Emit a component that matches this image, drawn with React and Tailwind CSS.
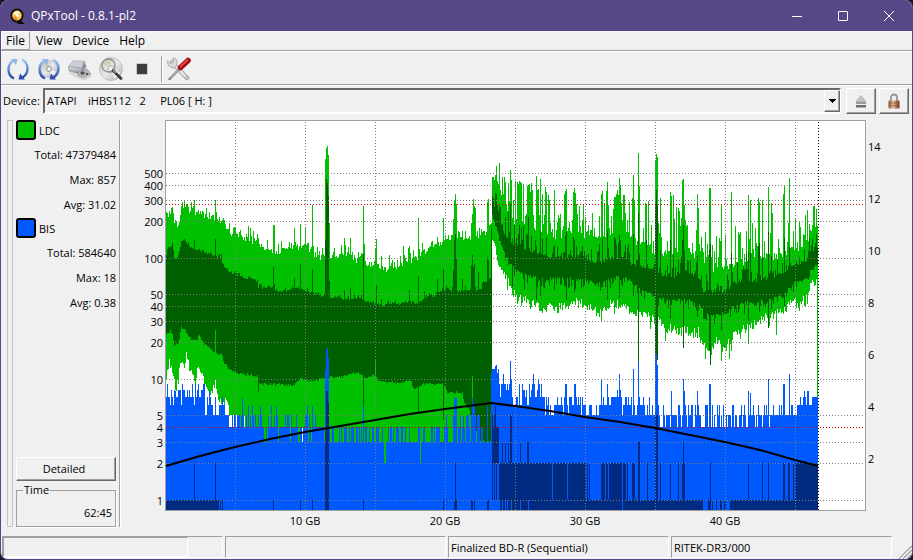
import React from 'react';

const GREEN = '#00c000';
const DARK_GREEN = '#006000';
const BLUE = '#0058ff';
const NAVY = '#002b80';

const PLOT = { left: 166, right: 865, top: 121, bottom: 510 };
const SPLIT = 492; // layer break

// log scale, 121px per decade
const yOf = (v) => Math.floor(500 - 121 * Math.log10(v));

const rand = (x, salt) => {
  const n = Math.sin(x * 127.1 + salt * 311.7) * 43758.5453;
  return n - Math.floor(n);
};

const lerp = (points, x) => {
  for (let i = 1; i < points.length; i++) {
    const [x1, y1] = points[i];
    const [x0, y0] = points[i - 1];
    if (x <= x1) return x1 === x0 ? y1 : y0 + ((y1 - y0) * (x - x0)) / (x1 - x0);
  }
  return points[points.length - 1][1];
};

const ldcMax = [[165, 221], [168, 216], [172, 210], [174, 221], [178, 226], [181, 209], [185, 205], [190, 211], [200, 213], [212, 218], [220, 221], [223, 221], [228, 232], [231, 236], [235, 232], [240, 240], [248, 238], [256, 243], [260, 249], [270, 249], [280, 252], [290, 248], [300, 247], [310, 252], [320, 257], [326, 258], [335, 256], [352, 256], [356, 262], [360, 254], [364, 257], [368, 266], [374, 261], [380, 268], [388, 272], [395, 266], [402, 264], [410, 261], [418, 259], [425, 251], [435, 245], [442, 242], [446, 238], [452, 240], [460, 236], [467, 240], [475, 236], [483, 236], [487, 229], [491, 222],
  [492, 178], [497, 181], [500, 190], [504, 206], [510, 216], [515, 222], [525, 224], [530, 216], [535, 230], [545, 234], [555, 236], [570, 234], [580, 229], [585, 236], [590, 240], [600, 239], [612, 232], [625, 230], [633, 240], [645, 248], [655, 255], [665, 256], [672, 252], [680, 250], [690, 253], [700, 261], [715, 271], [725, 266], [735, 266], [745, 261], [755, 261], [765, 256], [775, 257], [785, 254], [790, 249], [800, 248], [806, 243], [812, 233], [817, 225]];

const ldcMaxSpikes = [[182, 202], [191, 202], [194, 200], [215, 200], [240, 230], [248, 226], [250, 228], [257, 234], [273, 225], [274, 225], [294, 228], [300, 224], [305, 227], [312, 205], [317, 247], [325, 159], [326, 148], [327, 146], [328, 155], [329, 223], [344, 238], [345, 245], [350, 238], [358, 252], [363, 206], [364, 244], [375, 249], [376, 239], [381, 256], [389, 255], [403, 246], [408, 248], [409, 246], [413, 250], [418, 218], [419, 249], [422, 243], [437, 237], [443, 218], [453, 219], [454, 201], [455, 194], [456, 204], [462, 231], [465, 231], [471, 223], [472, 214], [473, 199], [474, 206], [475, 208], [487, 202], [488, 199],
  [493, 177], [495, 175], [496, 166], [497, 181], [498, 184], [500, 190], [502, 177], [504, 177], [505, 182], [508, 183], [510, 170], [511, 180], [515, 181], [517, 182], [518, 184], [519, 181], [520, 182], [521, 183], [523, 184], [527, 186], [528, 185], [529, 184], [530, 192], [531, 183], [532, 190], [536, 176], [537, 190], [538, 189], [540, 179], [542, 194], [545, 187], [546, 192], [548, 195], [549, 200], [554, 190], [558, 215], [564, 194], [565, 191], [566, 189], [569, 222], [573, 192], [574, 188], [575, 193], [576, 204], [577, 214], [579, 206], [582, 220], [588, 225], [599, 216], [601, 194], [602, 191], [604, 203], [606, 191], [607, 182], [608, 205], [611, 216], [614, 197], [615, 197], [616, 194], [617, 190], [618, 195], [619, 178], [620, 185], [621, 203], [623, 195], [625, 213], [627, 220], [632, 198], [633, 175], [634, 200], [638, 153], [639, 186], [645, 203], [646, 204], [648, 201], [651, 225], [655, 160], [656, 154], [657, 157], [658, 223], [660, 198], [667, 241], [670, 192], [671, 196], [673, 195], [676, 207], [678, 208], [679, 211], [682, 180], [683, 179], [684, 205], [685, 220], [686, 226], [687, 225], [692, 243], [697, 194], [698, 208], [709, 188], [710, 188], [712, 245], [721, 204], [725, 235], [731, 192], [735, 226], [746, 231], [748, 195], [750, 200], [752, 223], [756, 243], [758, 198], [759, 202], [762, 200], [768, 187], [771, 203], [772, 213], [778, 239], [783, 194], [784, 186], [788, 223], [789, 178], [793, 231], [795, 218], [804, 235], [807, 210], [810, 230], [814, 206], [816, 209], [817, 226]];

const ldcAvgTop = [[165, 257], [168, 248], [172, 245], [174, 257], [178, 258], [181, 241], [185, 240], [190, 248], [200, 250], [212, 256], [221, 257], [223, 268], [230, 272], [240, 276], [250, 279], [257, 281], [258, 287], [270, 288], [280, 292], [292, 289], [300, 288], [310, 293], [320, 296], [330, 297], [345, 299], [360, 298], [370, 303], [380, 305], [390, 304], [400, 304], [410, 301], [417, 305], [425, 298], [435, 295], [445, 289], [450, 291], [470, 291], [480, 289], [485, 282], [491, 279],
  [492, 200], [494, 210], [498, 222], [502, 230], [505, 236], [508, 240], [512, 244], [520, 248], [530, 252], [545, 257], [560, 258], [570, 257], [583, 257], [590, 262], [600, 262], [612, 258], [625, 259], [632, 264], [640, 267], [650, 268], [660, 277], [675, 277], [683, 268], [690, 274], [700, 283], [703, 291], [728, 292], [731, 284], [745, 283], [765, 280], [780, 275], [795, 265], [805, 262], [812, 252], [817, 247]];

const ldcAvgTopSpikes = [[194, 240], [215, 239], [273, 267], [274, 284], [294, 278], [300, 264], [312, 269], [325, 240], [326, 179], [327, 183], [328, 196], [329, 281], [344, 290], [350, 288], [363, 253], [376, 285], [381, 299], [409, 290], [418, 276], [424, 291], [437, 279], [443, 269], [446, 286], [453, 270], [454, 240], [455, 234], [456, 259], [462, 279], [465, 286], [471, 265], [472, 255], [473, 267], [474, 264], [478, 272], [487, 257], [488, 260], [491, 227],
  [495, 193], [496, 194], [497, 205], [499, 206], [502, 224], [505, 217], [508, 212], [510, 204], [514, 225], [519, 225], [521, 228], [523, 226], [528, 217], [531, 236], [536, 246], [540, 231], [546, 237], [554, 245], [557, 247], [565, 236], [566, 232], [574, 240], [576, 246], [602, 238], [607, 230], [614, 237], [619, 235], [620, 240], [633, 234], [638, 213], [646, 240], [655, 203], [656, 190], [657, 205], [660, 250], [670, 240], [673, 255], [678, 260], [682, 240], [683, 225], [684, 250], [697, 256], [709, 250], [710, 244], [731, 253], [746, 254], [748, 252], [750, 253], [758, 246], [759, 243], [762, 257], [768, 232], [771, 256], [784, 238], [789, 247], [814, 247]];

const ldcAvgBottom = [[165, 336], [170, 331], [172, 333], [174, 345], [178, 344], [181, 328], [184, 328], [187, 334], [192, 341], [197, 339], [199, 335], [203, 343], [210, 349], [215, 354], [221, 354], [224, 363], [230, 370], [240, 374], [257, 376], [259, 384], [292, 385], [300, 378], [310, 381], [325, 378], [341, 377], [350, 374], [360, 373], [365, 379], [372, 375], [376, 376], [379, 382], [400, 383], [411, 380], [413, 389], [425, 384], [443, 384], [447, 392], [462, 393], [464, 404], [469, 410], [474, 428], [480, 440], [491, 442],
  [492, 216], [496, 228], [500, 240], [505, 255], [512, 265], [520, 272], [530, 276], [545, 280], [555, 277], [570, 278], [585, 280], [600, 284], [612, 277], [625, 277], [640, 289], [655, 294], [662, 299], [690, 300], [700, 306], [705, 313], [715, 315], [728, 312], [733, 304], [745, 303], [765, 299], [780, 295], [795, 282], [805, 278], [815, 265], [817, 265]];

const ldcAvgBottomSpikes = [[215, 330], [258, 392], [363, 414], [375, 360], [418, 413], [443, 420], [472, 376], [512, 287], [524, 290], [536, 300], [540, 296], [554, 290], [566, 300], [574, 292], [607, 300], [619, 298], [633, 296], [638, 361], [655, 358], [656, 365], [657, 360], [670, 319], [683, 348], [697, 317], [709, 350], [710, 365], [721, 330], [748, 321], [768, 328], [759, 312], [771, 309], [784, 306]];

const ldcMin = [[165, 377], [168, 372], [170, 366], [173, 376], [175, 390], [178, 380], [180, 362], [184, 364], [186, 354], [189, 367], [195, 384], [198, 364], [203, 380], [208, 394], [214, 388], [218, 398], [228, 404], [229, 442], [491, 442],
  [492, 236], [494, 243], [497, 255], [500, 265], [505, 275], [510, 286], [515, 295], [525, 300], [535, 304], [555, 306], [570, 305], [580, 300], [590, 307], [600, 310], [612, 303], [625, 306], [635, 312], [645, 313], [655, 320], [660, 320], [665, 330], [672, 326], [680, 328], [690, 332], [698, 330], [705, 348], [712, 345], [718, 338], [724, 345], [731, 340], [735, 330], [745, 328], [760, 320], [775, 312], [785, 308], [792, 300], [800, 302], [806, 298], [811, 283], [817, 280]];

const ldcMinSpikes = [[169, 359], [186, 352], [215, 380], [302, 428], [384, 463], [385, 463], [420, 463], [521, 306], [540, 311], [553, 309], [601, 321], [650, 329], [665, 341], [700, 343], [705, 359], [721, 361], [729, 359], [748, 344], [776, 335], [817, 400]];

// x range, BIS levels that show up in it
const bisZones = [
  [166, 169, [6, 7, 9]], [169, 178, [7, 7, 7, 8, 6]], [178, 205, [6, 7, 8, 7, 8, 9]], [205, 226, [5, 6, 6, 7, 5]],
  [226, 246, [5, 5, 5, 4]], [246, 262, [5, 5, 4, 4]], [262, 325, [4, 4, 3, 4, 5, 4]], [325, 345, [4, 3, 3, 4]],
  [345, 445, [4, 4, 3, 3]], [445, 480, [3, 4, 5, 3]], [480, 491, [3, 4, 3]],
  [491, 499, [11, 12, 12]], [499, 512, [9, 8, 9, 7]], [512, 530, [8, 6, 7, 9, 6]], [530, 545, [9, 8, 7, 9, 7]],
  [545, 585, [6, 7, 5, 6, 6, 7]], [585, 600, [5, 6, 6, 5]], [600, 614, [6, 7, 6]], [614, 622, [8, 7]], [622, 655, [6, 7, 6, 5]],
  [655, 700, [5, 4, 6, 5]], [700, 728, [4, 5, 6, 4]], [728, 770, [5, 6, 5, 4]], [770, 798, [5, 5, 6]], [798, 812, [6, 7, 6]], [812, 818, [7]],
];

const bisSpikes = [[167, 384], [175, 391], [182, 384], [198, 384], [209, 391], [242, 398], [248, 406], [252, 406], [260, 406], [271, 406], [276, 406], [307, 406], [312, 406], [325, 370], [326, 350], [327, 348], [328, 358], [363, 406], [454, 398], [455, 398], [456, 398], [472, 398], [473, 406], [474, 406], [487, 406], [492, 369], [495, 366], [496, 365], [503, 374], [510, 361], [511, 379], [533, 374], [538, 379], [565, 384], [566, 384], [574, 384], [575, 384], [601, 379], [607, 384], [619, 374], [633, 369], [638, 361], [655, 354], [656, 354], [657, 365], [671, 391], [683, 379], [684, 391], [697, 391], [709, 384], [710, 384], [748, 391], [750, 393], [768, 379], [783, 384], [784, 384], [789, 374], [804, 391], [807, 391], [808, 391]];

// x, width, top, bottom
const bisAvg = [
  [166, 49, 500, 510], [216, 1, 500, 510], [217, 2, 500, 510], [220, 1, 500, 510], [222, 1, 500, 510],
  [194, 1, 463, 500], [215, 1, 463, 510], [273, 1, 500, 510], [300, 1, 500, 510], [312, 1, 500, 510],
  [325, 1, 430, 510], [326, 2, 391, 510], [328, 1, 403, 510], [363, 1, 500, 510], [443, 1, 500, 510],
  [455, 1, 463, 510], [454, 3, 500, 510], [471, 2, 500, 510], [474, 1, 500, 510], [487, 2, 500, 510],
  [492, 1, 415, 500], [493, 1, 427, 463], [494, 1, 415, 500], [495, 1, 406, 463], [496, 1, 427, 500], [497, 2, 427, 463],
  [502, 1, 442, 463], [505, 1, 442, 463], [508, 1, 442, 463], [510, 2, 415, 463], [520, 1, 442, 463], [527, 2, 442, 463],
  [499, 53, 463, 500], [553, 14, 463, 500], [568, 18, 463, 500], [587, 1, 463, 500], [589, 1, 463, 500],
  [601, 4, 463, 500], [606, 2, 463, 500], [609, 1, 463, 500], [610, 12, 463, 500], [623, 3, 463, 500], [627, 1, 463, 500],
  [632, 3, 463, 500], [638, 2, 442, 500], [647, 1, 463, 500], [655, 3, 415, 500], [660, 1, 463, 500], [670, 1, 463, 500],
  [678, 1, 463, 500], [682, 3, 463, 500], [683, 1, 442, 463], [710, 1, 463, 510], [748, 1, 463, 500], [762, 1, 463, 500],
  [768, 1, 463, 500], [783, 2, 463, 500], [788, 2, 463, 500], [793, 1, 463, 500], [795, 23, 463, 500],
  [500, 2, 500, 510], [503, 2, 500, 510], [506, 1, 500, 510], [508, 3, 500, 510], [512, 8, 500, 510], [521, 7, 500, 510],
  [529, 93, 500, 510], [623, 80, 500, 510], [708, 3, 500, 510], [712, 1, 500, 510], [716, 1, 500, 510], [720, 2, 500, 510],
  [724, 2, 500, 510], [730, 88, 500, 510],
];

// grow = how far single columns may stick out past the envelope, [first layer, second layer]
const layer = (anchors, spikes, salt, noise, grow) => {
  const map = new Map(spikes);
  const out = {};
  for (let x = PLOT.left; x < 818; x++) {
    const reach = x < SPLIT ? grow[0] : grow[1];
    const stick = Math.pow(rand(x, salt + 20), 4) * reach;
    out[x] = map.has(x) ? map.get(x) : Math.round(lerp(anchors, x) + (rand(x, salt) - 0.5) * noise + stick);
  }
  return out;
};

const bars = (top, bottom) => {
  let d = '';
  for (let x = PLOT.left; x < 818; x++) {
    const b = typeof bottom === 'number' ? bottom : bottom[x];
    if (top[x] < b) d += `M${x} ${top[x]}h1V${b}h-1z`;
  }
  return d;
};

const maxTop = layer(ldcMax, ldcMaxSpikes, 1, 7, [-8, -34]);
const avgTop = layer(ldcAvgTop, ldcAvgTopSpikes, 2, 3, [-3, -20]);
const avgBottom = layer(ldcAvgBottom, ldcAvgBottomSpikes, 3, 3, [0, 10]);
const minBottom = layer(ldcMin, ldcMinSpikes, 4, 9, [0, 8]);
for (let x = PLOT.left; x < 818; x++) {
  if (avgBottom[x] > minBottom[x]) minBottom[x] = avgBottom[x];
  if (x > 228 && x < SPLIT && minBottom[x] < 463 && x !== 302) minBottom[x] = 442;
}
// small holes between the two series
[229, 230, 231, 233, 236, 244].forEach((x) => { minBottom[x] = 415; });

const bisSpikeMap = new Map(bisSpikes);
const bisTop = {};
bisZones.forEach(([from, to, levels]) => {
  for (let x = from; x < to; x++) {
    bisTop[x] = bisSpikeMap.get(x) ?? yOf(levels[Math.floor(rand(x, 9) * levels.length)]);
  }
});
[229, 230, 231, 233, 236, 244].forEach((x) => { bisTop[x] = 427; });
[384, 385, 420].forEach((x) => { bisTop[x] = 463; });
bisTop[302] = 442;

const speed = [[166, 466], [200, 456], [235, 447], [270, 439], [305, 432], [340, 426], [375, 420], [410, 414], [445, 409], [491, 403], [515, 406], [550, 411], [585, 417], [620, 422], [655, 428], [690, 435], [725, 442], [760, 450], [795, 460], [818, 466]];

const leftTicks = [500, 400, 300, 200, 100, 50, 40, 30, 20, 10, 5, 4, 3, 2, 1];
const rightTicks = [14, 12, 10, 8, 6, 4, 2];

function Chart() {
  return (
    <svg viewBox="121 117 791 415" className="block w-full h-full min-w-0 flex-1 text-[11px]" role="img" aria-label="LDC / BIS">
      <g shapeRendering="crispEdges">
        <rect x="165" y="120" width="701" height="391" fill="#a0a0a0" />
        <rect x="166" y="121" width="699" height="389" fill="#fff" />
        <path d={bars(maxTop, minBottom)} fill={GREEN} />
        <path d={bars(avgTop, avgBottom)} fill={DARK_GREEN} />
        <path d={bars(bisTop, 510)} fill={BLUE} />
        {bisAvg.map(([x, w, top, bottom]) => (
          <rect key={`${x}-${top}`} x={x} y={top} width={w} height={bottom - top} fill={NAVY} />
        ))}
        {leftTicks.map((v) => (
          <line key={v} x1="166" x2="865" y1={yOf(v) + 0.5} y2={yOf(v) + 0.5} stroke={v === 4 ? '#d00000' : '#808080'} strokeDasharray="1 2" />
        ))}
        <line x1="166" x2="865" y1="204.5" y2="204.5" stroke="#d00000" strokeDasharray="1 2" />
        {[5, 10, 15, 20, 25, 30, 35, 40, 45].map((gb) => (
          <line key={gb} x1={165.5 + gb * 14} x2={165.5 + gb * 14} y1="122" y2="510" stroke="#808080" strokeDasharray="1 2" />
        ))}
        <line x1="818.5" x2="818.5" y1="122" y2="510" stroke="#000" strokeDasharray="1 2" />
      </g>
      <polyline points={speed.map((p) => p.join(',')).join(' ')} fill="none" stroke="#000" strokeWidth="2" />
      {leftTicks.map((v) => (
        <text key={v} x="163" y={yOf(v) + 5} textAnchor="end">{v}</text>
      ))}
      {rightTicks.map((v) => (
        <text key={v} x="868" y={511 - v * 26 + 4} textAnchor="start">{v}</text>
      ))}
      {[10, 20, 30, 40].map((gb) => (
        <text key={gb} x={165 + gb * 14} y="525" textAnchor="middle">{gb} GB</text>
      ))}
    </svg>
  );
}

function Arrows() {
  return (
    <>
      <path d="M8 21.5C1 18 0.5 8 7.500 3.500" fill="none" stroke="url(#arc)" strokeWidth="2.400" />
      <path d="M5 2h6.500l-1.500 6z" fill="#8db8ea" />
      <path d="M16 2.500C23 6 23.500 16 16.500 20.500" fill="none" stroke="url(#arc)" strokeWidth="2.400" />
      <path d="M19 22.500h-6.500l1.500-6z" fill="#2a4fae" />
    </>
  );
}

function Disc({ r = 11 }) {
  return (
    <>
      <circle cx="12" cy="12" r={r} fill="url(#disc)" stroke="#b0b0b0" strokeWidth="0.6" />
      <path d={`M12 12L${12 - r * 0.7} ${12 - r * 0.6}A${r} ${r} 0 0 1 ${12 - r * 0.1} ${12 - r * 0.9}z`} fill="#b7c9a0" opacity="0.7" />
      <path d={`M12 12L${12 + r * 0.8} ${12 + r * 0.3}A${r} ${r} 0 0 1 ${12 + r * 0.3} ${12 + r * 0.85}z`} fill="#f4f4f4" />
      <circle cx="12" cy="12" r={r * 0.3} fill="#dcdcdc" stroke="#8c8c8c" strokeWidth="0.8" />
      <circle cx="12" cy="12" r="1.300" fill="#fff" />
    </>
  );
}

function ToolButton({ label, children }) {
  return (
    <button type="button" aria-label={label} className="w-[31px] h-8 flex items-center justify-center">
      <svg viewBox="0 0 24 24" className="w-6 h-6">{children}</svg>
    </button>
  );
}

function Toolbar() {
  return (
    <div className="h-[34px] pl-px flex items-center border-b border-white shadow-[inset_0_-1px_0_#a0a0a0]">
      <svg className="absolute w-0 h-0" aria-hidden="true">
        <defs>
          <linearGradient id="arc" x1="0" y1="0" x2="0" y2="1">
            <stop offset="0" stopColor="#9cc6f2" />
            <stop offset="1" stopColor="#2447a8" />
          </linearGradient>
          <linearGradient id="disc" x1="0" y1="0" x2="1" y2="1">
            <stop offset="0" stopColor="#b9b9b9" />
            <stop offset="0.5" stopColor="#e9e9e9" />
            <stop offset="1" stopColor="#a8a8a8" />
          </linearGradient>
          <linearGradient id="metal" x1="0" y1="0" x2="0" y2="1">
            <stop offset="0" stopColor="#e6e8ea" />
            <stop offset="1" stopColor="#7d8288" />
          </linearGradient>
          <linearGradient id="brass" x1="0" y1="0" x2="1" y2="0">
            <stop offset="0" stopColor="#8a4a2c" />
            <stop offset="0.4" stopColor="#e8c0a0" />
            <stop offset="1" stopColor="#6e3018" />
          </linearGradient>
        </defs>
      </svg>
      <ToolButton label="Refresh devices"><Arrows /></ToolButton>
      <ToolButton label="Reload media"><Disc r={8.5} /><Arrows /></ToolButton>
      <ToolButton label="Device info">
        <path d="M2 15l14 6 7-3v2l-7 3.500L1 17z" fill="#d2d2d2" />
        <path d="M0.500 9.500L5 4h11.500l-3 7z" fill="#c9d0da" stroke="#98a0aa" strokeWidth="0.6" />
        <path d="M0.500 9.500l13 2v6L1 14z" fill="url(#metal)" stroke="#8a8a8a" strokeWidth="0.6" />
        <path d="M16.500 4l2 6-4 4-1-2.500z" fill="#8a9098" />
        <path d="M10 14l9-2 4 5-7 3.500-6-2z" fill="#b4b6b8" stroke="#858585" strokeWidth="0.6" />
        <ellipse cx="14.500" cy="16" rx="2.200" ry="1.800" fill="#5c4c48" />
        <circle cx="19" cy="17" r="1.300" fill="#6e5852" />
      </ToolButton>
      <ToolButton label="Media info">
        <Disc r={11.5} />
        <circle cx="9.500" cy="8.500" r="6.500" fill="#e8ece6" fillOpacity="0.4" stroke="#8a8c8e" strokeWidth="1.300" />
        <path d="M5 8a5 5 0 0 1 4-4.500l-1 5z" fill="#b8d8a0" opacity="0.8" />
        <path d="M9 4l3 0.500-2 4z" fill="#e8b0b8" opacity="0.7" />
        <path d="M14 13.500l8 8" stroke="#3c3c3c" strokeWidth="2.800" strokeLinecap="round" />
        <path d="M14 13l3 3" stroke="#9a9a9a" strokeWidth="1.500" />
      </ToolButton>
      <ToolButton label="Stop">
        <rect x="7" y="7" width="10" height="10" fill="#3c3c3c" stroke="#4c4c4c" strokeWidth="0.5" />
      </ToolButton>
      <div className="w-0.5 h-[26px] ml-1 border-l border-[#a0a0a0] bg-white" />
      <ToolButton label="Preferences">
        <path d="M5 5.500L20 21" stroke="#9a9a9a" strokeWidth="4.500" strokeLinecap="round" />
        <path d="M5 5.500L20 21" stroke="#e2e2e2" strokeWidth="3" strokeLinecap="round" />
        <path d="M0.500 4L4 6.500 6.500 5 6 1C9 0.500 11 4 9.500 8.500L7 11C3 11.500 0 8 0.500 4z" fill="#dadada" stroke="#9a9a9a" strokeWidth="0.7" />
        <circle cx="19.500" cy="20.500" r="1.200" fill="#f0f0f0" stroke="#777" strokeWidth="0.6" />
        <path d="M2.500 22L13 11.500" stroke="#777" strokeWidth="2.400" strokeLinecap="round" />
        <path d="M3 21.500L13 11.500" stroke="#ddd" strokeWidth="1" />
        <path d="M13.500 10.500L21 3.500" stroke="#9c0d12" strokeWidth="5.500" strokeLinecap="round" />
        <path d="M13.500 9.500L20.500 3" stroke="#ee4248" strokeWidth="2.200" strokeLinecap="round" />
      </ToolButton>
    </div>
  );
}

const raised = 'bg-[#f0f0f0] border border-t-white border-l-white border-b-[#696969] border-r-[#696969] shadow-[inset_-1px_-1px_0_#a0a0a0]';
const sunken = 'border border-t-[#a0a0a0] border-l-[#a0a0a0] border-b-white border-r-white';

function DeviceRow() {
  return (
    <div className="h-[31px] pt-0.5 pl-0.5 pr-[3px] flex items-start gap-[3px]">
      <label htmlFor="device" className="w-[37px] h-[27px] flex items-center whitespace-nowrap">Device:</label>
      <div className="relative flex-1 min-w-0 mr-0.5">
        <select
          id="device"
          className="appearance-none w-full h-[26px] pl-0.5 pt-px outline-none border-2 border-t-[#696969] border-l-[#696969] border-b-white border-r-white bg-[#f0f0f0]"
        >
          <option>{'ATAPI\u00a0\u00a0\u00a0 iHBS112\u00a0\u00a0 2\u00a0\u00a0\u00a0\u00a0 PL06 [ H: ]'}</option>
        </select>
        <span className={`absolute right-px top-0.5 w-4 h-[22px] flex items-center justify-center pointer-events-none ${raised}`}>
          <svg viewBox="0 0 7 4" className="w-[7px] h-1" shapeRendering="crispEdges"><path d="M0 0h7v1h-1v1h-1v1h-1v1h-1v-1h-1v-1h-1v-1h-1z" /></svg>
        </span>
      </div>
      <button type="button" aria-label="Eject" className={`w-[30px] h-[26px] flex items-center justify-center ${raised}`}>
        <svg viewBox="0 0 12 13" className="w-3 h-[13px]">
          <path d="M6 0.500L11 6.500H1z" fill="#c4c4c4" stroke="#9a9a9a" strokeWidth="0.5" />
          <rect x="1" y="7" width="10" height="2" fill="#9c9c9c" />
          <rect x="1" y="10" width="10" height="2.500" fill="#6b7075" />
        </svg>
      </button>
      <button type="button" aria-label="Lock" className={`w-[30px] h-[26px] flex items-center justify-center ${raised}`}>
        <svg viewBox="0 0 12 16" className="w-3 h-4">
          <path d="M3 8V4.500a3 3 0 0 1 6 0V8" fill="none" stroke="#9a9390" strokeWidth="1.800" />
          <rect x="0.500" y="7.500" width="11" height="8" rx="1" fill="url(#brass)" />
          <path d="M1 10h10M1 12.500h10" stroke="#7a4026" strokeWidth="0.5" />
        </svg>
      </button>
    </div>
  );
}

const series = [
  { name: 'LDC', swatch: 'bg-[#00c000]', total: '47379484', max: '857', avg: '31.02' },
  { name: 'BIS', swatch: 'bg-[#0058ff]', total: '584640', max: '18', avg: '0.38' },
];

function SidePanel() {
  return (
    <aside className="w-[120px] shrink-0 pl-1.5 pt-[3px] pb-[5px] flex">
      <div className="w-1.5 mr-[3px] border border-[#c4c4c4]" />
      <div className="flex-1 min-w-0 mr-[3px] flex flex-col">
        {series.map((s) => (
          <section key={s.name} className="mb-px">
            <div className="h-5 mb-0.5 flex items-center gap-[3px]">
              <span className={`w-5 h-5 rounded-[3px] border-2 border-black ${s.swatch}`} />
              <span className="pt-0.5">{s.name}</span>
            </div>
            <p className="h-[25px] pt-0.5 flex items-center justify-end">Total: {s.total}</p>
            <p className="h-[25px] pt-0.5 flex items-center justify-end">Max: {s.max}</p>
            <p className="h-[25px] pt-0.5 flex items-center justify-end">Avg: {s.avg}</p>
          </section>
        ))}
        <button type="button" className={`mt-auto h-6 mb-0.5 pt-px pr-1 text-center ${raised}`}>Detailed</button>
        <fieldset className="h-11 pr-[3px] border border-[#a0a0a0] shadow-[1px_1px_0_#fff]">
          <legend className="ml-1.5 px-px leading-[14px]">Time</legend>
          <output className="block text-right mt-2 leading-[16px]">62:45</output>
        </fieldset>
      </div>
      <div className="w-0.5 border-l border-[#a0a0a0] bg-white" />
    </aside>
  );
}

function StatusBar() {
  return (
    <footer className="h-[27px] pt-1 pl-px flex">
      <div className="flex-1 grid grid-cols-4 gap-x-0.5 h-[22px]">
        <div className={sunken}><div className={`w-[185px] h-full ${sunken}`} /></div>
        <div className={sunken} />
        <div className={`pl-0.5 pt-0.5 flex items-center ${sunken}`}>Finalized BD-R (Sequential)</div>
        <div className={`pl-0.5 pt-0.5 flex items-center ${sunken}`}>RITEK-DR3/000</div>
      </div>
      <svg viewBox="0 0 20 23" className="w-5 h-[23px]">
        <path d="M7 23L20 10M11 23L20 14M15 23L20 18" stroke="#a0a0a0" strokeWidth="1.500" />
        <path d="M8.500 23L20 11.500M12.500 23L20 15.500" stroke="#fff" />
      </svg>
    </footer>
  );
}

function TitleBar() {
  return (
    <header className="h-[31px] bg-[#564787] text-white flex items-center font-['Open_Sans',sans-serif] text-[12px]">
      <svg viewBox="0 0 16 16" className="w-4 h-4 ml-2 mr-1.5">
        <ellipse cx="8" cy="7.500" rx="6.500" ry="7" fill="#110c08" />
        <path d="M9 11l5 4.500-5-0.500z" fill="#110c08" stroke="#110c08" strokeWidth="1.500" />
        <ellipse cx="8" cy="7.500" rx="4.800" ry="5" fill="#f7c850" />
        <path d="M4 6a4.500 4.500 0 0 1 7-2L8 7.500z" fill="#fff3c8" />
        <path d="M4 9a4.500 4.500 0 0 0 4 3.500V8z" fill="#ee8a2a" />
        <circle cx="8.500" cy="7.500" r="1.500" fill="#fff" />
      </svg>
      <h1>QPxTool - 0.8.1-pl2</h1>
      <div className="ml-auto flex h-full">
        <button type="button" aria-label="Minimize" className="w-[46px] flex items-center justify-center">
          <svg viewBox="0 0 10 10" className="w-2.5 h-2.5"><path d="M0 5.500h10" stroke="#fff" /></svg>
        </button>
        <button type="button" aria-label="Maximize" className="w-[46px] flex items-center justify-center">
          <svg viewBox="0 0 10 10" className="w-2.5 h-2.5"><rect x="0.500" y="0.500" width="9" height="9" rx="0.500" fill="none" stroke="#fff" /></svg>
        </button>
        <button type="button" aria-label="Close" className="w-[46px] flex items-center justify-center">
          <svg viewBox="0 0 10 10" className="w-2.5 h-2.5"><path d="M0 0l10 10M10 0L0 10" stroke="#fff" /></svg>
        </button>
      </div>
    </header>
  );
}

export default function App() {
  return (
    <div className="min-h-screen flex bg-[#1a1626]">
      <div className="flex-1 min-w-0 flex flex-col rounded-lg overflow-hidden border border-t-0 border-[#564787] bg-[#f0f0f0] text-black font-['Open_Sans',sans-serif] text-[11px]">
        <TitleBar />
        <nav className="h-[21px] flex items-stretch border-b border-white shadow-[inset_0_-1px_0_#a0a0a0] pb-px text-[12px]">
          <button type="button" className="px-1 mr-px border border-t-white border-l-white border-r-[#a0a0a0] border-b-[#a0a0a0] flex items-center">File</button>
          <button type="button" className="px-[5px] flex items-center">View</button>
          <button type="button" className="px-[5px] flex items-center">Device</button>
          <button type="button" className="px-[5px] flex items-center">Help</button>
        </nav>
        <Toolbar />
        <DeviceRow />
        <main className="flex-1 flex min-h-0">
          <SidePanel />
          <Chart />
        </main>
        <StatusBar />
      </div>
    </div>
  );
}
